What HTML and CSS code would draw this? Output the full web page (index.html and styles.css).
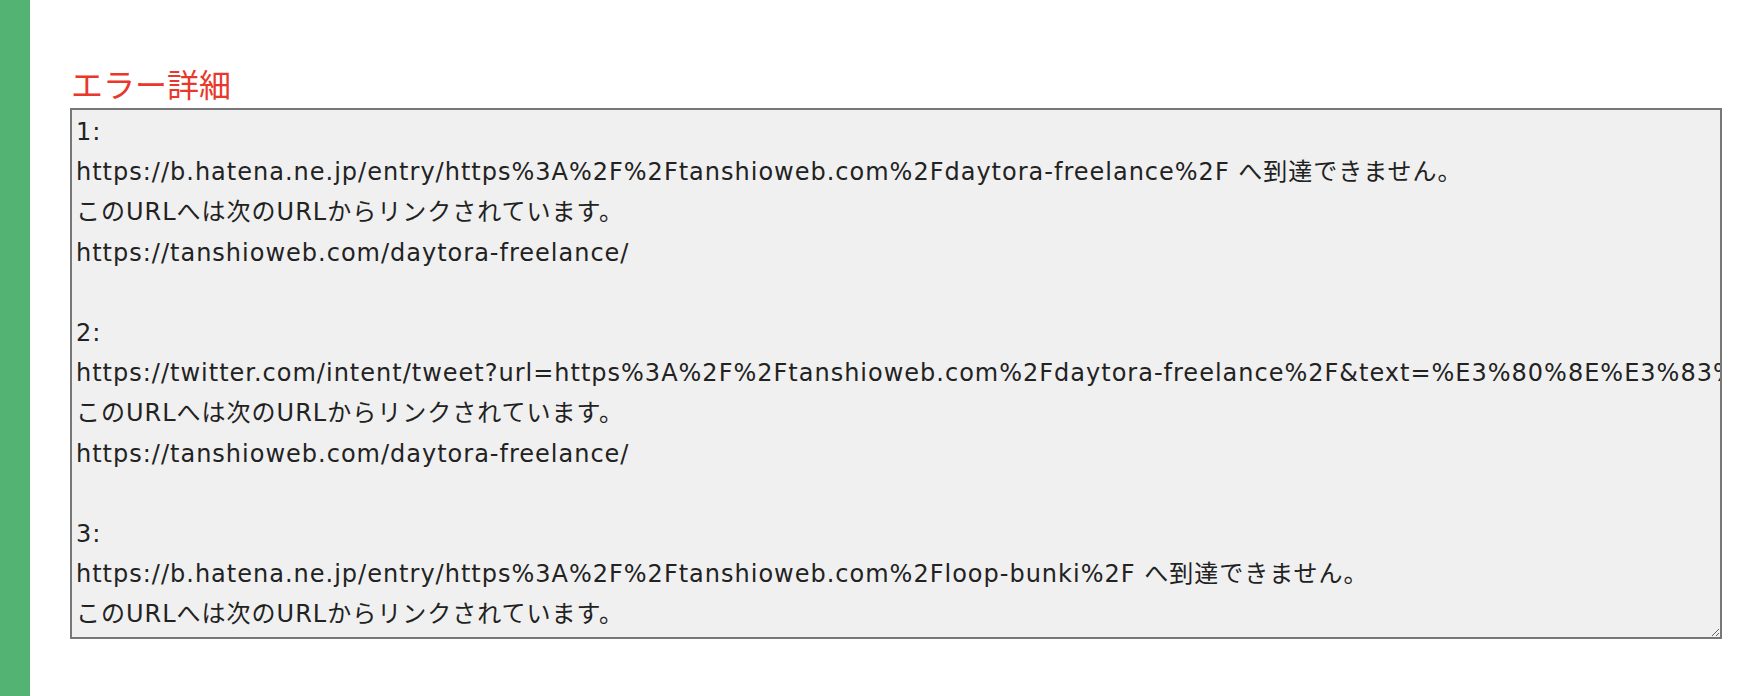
FILE: index.html
```html
<!DOCTYPE html>
<html lang="ja">
<head>
    <meta charset="UTF-8">
    <meta name="viewport" content="width=device-width, initial-scale=1.0">
    <title>エラー詳細</title>
    <link rel="stylesheet" href="styles.css">
</head>
<body>
    <div class="sidebar"></div>
    <main class="content">
        <h2 class="error-title">エラー詳細</h2>
        <textarea class="error-log" readonly wrap="off">1:
https://b.hatena.ne.jp/entry/https%3A%2F%2Ftanshioweb.com%2Fdaytora-freelance%2F へ到達できません。
このURLへは次のURLからリンクされています。
https://tanshioweb.com/daytora-freelance/

2:
https://twitter.com/intent/tweet?url=https%3A%2F%2Ftanshioweb.com%2Fdaytora-freelance%2F&amp;text=%E3%80%8E%E3%83%87%E3%82%A4%E3%83%88%E3%83%A9%E3%80%8F へ到達できません。
このURLへは次のURLからリンクされています。
https://tanshioweb.com/daytora-freelance/

3:
https://b.hatena.ne.jp/entry/https%3A%2F%2Ftanshioweb.com%2Floop-bunki%2F へ到達できません。
このURLへは次のURLからリンクされています。
https://tanshioweb.com/loop-bunki/
</textarea>
    </main>
</body>
</html>
```

FILE: styles.css
```css
html, body {
    margin: 0;
    height: 100%;
}

body {
    display: flex;
    background-color: #fff;
    font-family: "Noto Sans CJK JP", sans-serif;
}

.sidebar {
    width: 30px;
    flex-shrink: 0;
    background-color: #52b373;
}

.content {
    flex: 1;
    padding: 0 30px 0 40px;
}

.error-title {
    margin: 62px 0 4px 1px;
    font-size: 32px;
    line-height: 42px;
    font-weight: normal;
    color: #e9382b;
}

.error-log {
    display: block;
    box-sizing: border-box;
    width: 100%;
    height: 531px;
    margin: 0;
    padding: 2px 4px;
    border: 2px solid #777;
    border-radius: 0;
    background-color: #f0f0f0;
    color: #222;
    font-family: "DejaVu Sans", "Noto Sans CJK JP", sans-serif;
    font-size: 24px;
    letter-spacing: 1px;
    line-height: 40.2px;
    overflow: auto;
    scrollbar-width: none;
    resize: both;
    outline: none;
}
```
